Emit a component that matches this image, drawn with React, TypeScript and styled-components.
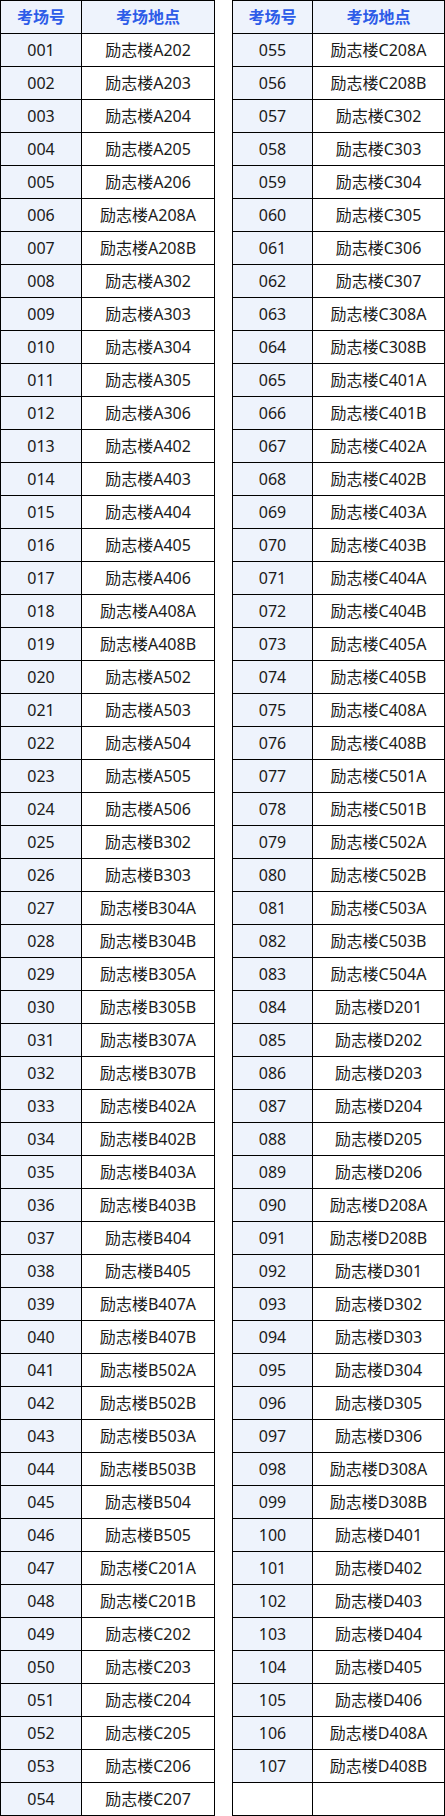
import React from "react";
import styled, { createGlobalStyle } from "styled-components";

const Global = createGlobalStyle`
  html, body { margin: 0; padding: 0; background: #ffffff; }
  body { font-family: "Noto Sans", "Noto Sans CJK SC", sans-serif; }
`;

const Page = styled.div`
  display: flex;
  gap: 17px;
  align-items: flex-start;
`;

const Grid = styled.div<{ $first: number; $second: number }>`
  display: grid;
  grid-template-columns: ${(p) => p.$first}px ${(p) => p.$second}px;
  grid-auto-rows: 33px;
  border-top: 1px solid #000;
  border-left: 1px solid #000;
`;

const Cell = styled.div<{ $tint?: boolean; $head?: boolean }>`
  box-sizing: border-box;
  border-right: 1px solid #000;
  border-bottom: 1px solid #000;
  display: flex;
  align-items: center;
  justify-content: center;
  background: ${(p) => (p.$tint ? "#eef3fc" : "#ffffff")};
  color: ${(p) => (p.$head ? "#2d5ce8" : "#1a1a1a")};
  font-family: "Noto Sans", "Noto Sans CJK SC", sans-serif;
  font-weight: ${(p) => (p.$head ? 700 : 400)};
  font-size: 16px;
  line-height: 1;
  white-space: nowrap;
`;

const left: [string, string][] = [
  ["001", "A202"], ["002", "A203"], ["003", "A204"], ["004", "A205"], ["005", "A206"],
  ["006", "A208A"], ["007", "A208B"], ["008", "A302"], ["009", "A303"], ["010", "A304"],
  ["011", "A305"], ["012", "A306"], ["013", "A402"], ["014", "A403"], ["015", "A404"],
  ["016", "A405"], ["017", "A406"], ["018", "A408A"], ["019", "A408B"], ["020", "A502"],
  ["021", "A503"], ["022", "A504"], ["023", "A505"], ["024", "A506"], ["025", "B302"],
  ["026", "B303"], ["027", "B304A"], ["028", "B304B"], ["029", "B305A"], ["030", "B305B"],
  ["031", "B307A"], ["032", "B307B"], ["033", "B402A"], ["034", "B402B"], ["035", "B403A"],
  ["036", "B403B"], ["037", "B404"], ["038", "B405"], ["039", "B407A"], ["040", "B407B"],
  ["041", "B502A"], ["042", "B502B"], ["043", "B503A"], ["044", "B503B"], ["045", "B504"],
  ["046", "B505"], ["047", "C201A"], ["048", "C201B"], ["049", "C202"], ["050", "C203"],
  ["051", "C204"], ["052", "C205"], ["053", "C206"], ["054", "C207"],
];

const right: [string, string][] = [
  ["055", "C208A"], ["056", "C208B"], ["057", "C302"], ["058", "C303"], ["059", "C304"],
  ["060", "C305"], ["061", "C306"], ["062", "C307"], ["063", "C308A"], ["064", "C308B"],
  ["065", "C401A"], ["066", "C401B"], ["067", "C402A"], ["068", "C402B"], ["069", "C403A"],
  ["070", "C403B"], ["071", "C404A"], ["072", "C404B"], ["073", "C405A"], ["074", "C405B"],
  ["075", "C408A"], ["076", "C408B"], ["077", "C501A"], ["078", "C501B"], ["079", "C502A"],
  ["080", "C502B"], ["081", "C503A"], ["082", "C503B"], ["083", "C504A"], ["084", "D201"],
  ["085", "D202"], ["086", "D203"], ["087", "D204"], ["088", "D205"], ["089", "D206"],
  ["090", "D208A"], ["091", "D208B"], ["092", "D301"], ["093", "D302"], ["094", "D303"],
  ["095", "D304"], ["096", "D305"], ["097", "D306"], ["098", "D308A"], ["099", "D308B"],
  ["100", "D401"], ["101", "D402"], ["102", "D403"], ["103", "D404"], ["104", "D405"],
  ["105", "D406"], ["106", "D408A"], ["107", "D408B"],
];

function RoomTable({ rows, first, second, pad }: { rows: [string, string][]; first: number; second: number; pad: number }) {
  return (
    <Grid $first={first} $second={second}>
      <Cell $tint $head>考场号</Cell>
      <Cell $tint $head>考场地点</Cell>
      {rows.map(([n, r]) => (
        <React.Fragment key={n}>
          <Cell $tint>{n}</Cell>
          <Cell>励志楼{r}</Cell>
        </React.Fragment>
      ))}
      {Array.from({ length: pad }).map((_, i) => (
        <React.Fragment key={"pad" + i}>
          <Cell />
          <Cell />
        </React.Fragment>
      ))}
    </Grid>
  );
}

export default function App() {
  return (
    <>
      <Global />
      <Page>
        <RoomTable rows={left} first={81} second={133} pad={0} />
        <RoomTable rows={right} first={80} second={132} pad={1} />
      </Page>
    </>
  );
}
